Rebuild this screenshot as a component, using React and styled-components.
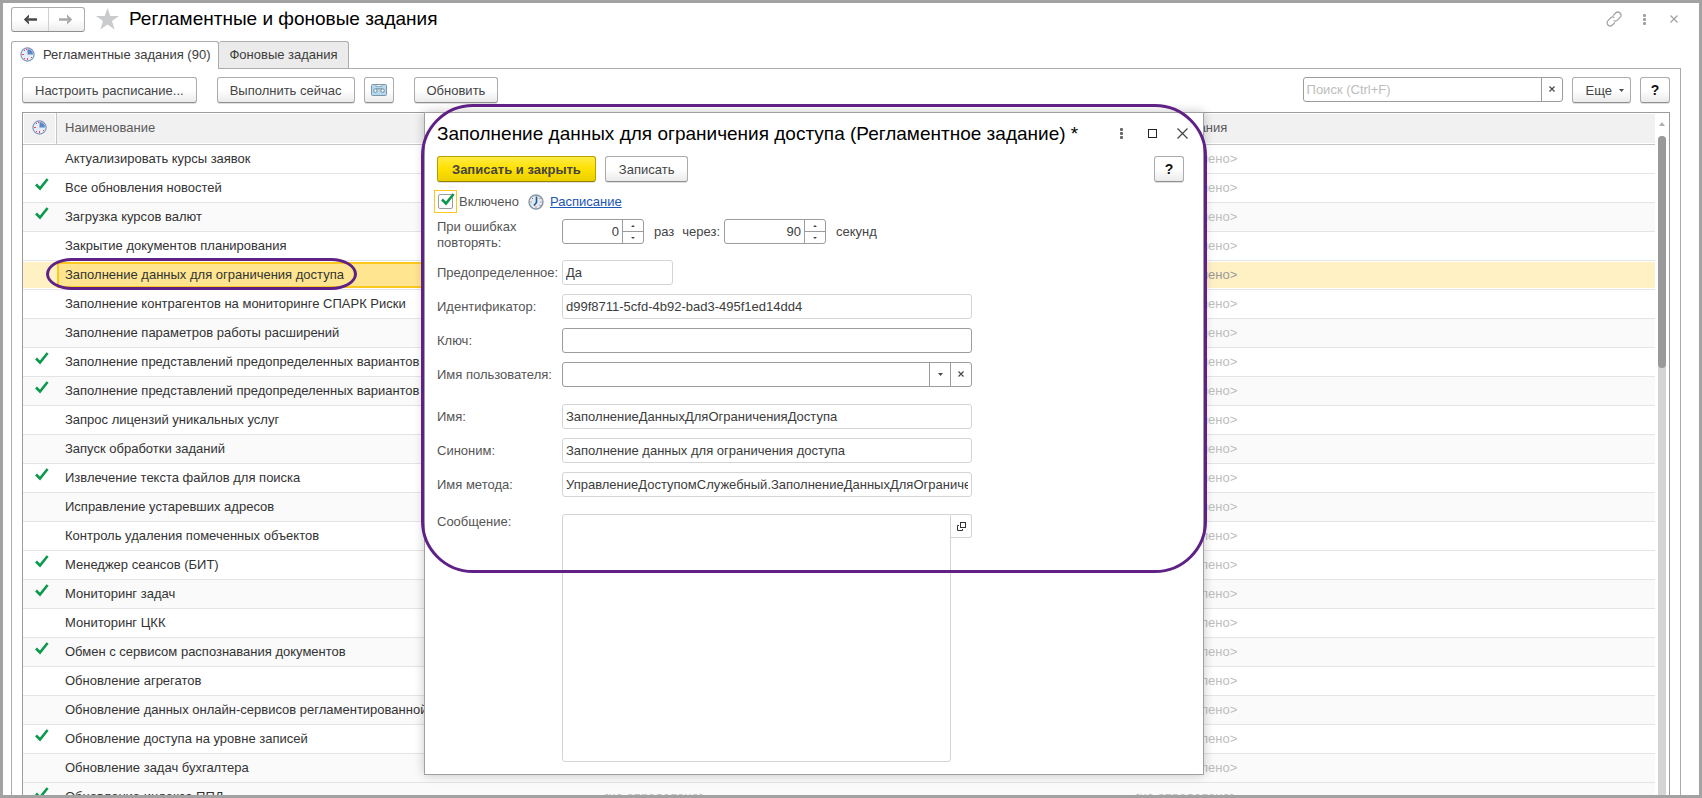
import React from "react";
import styled, { createGlobalStyle, css } from "styled-components";

const Global = createGlobalStyle`
  * { box-sizing: border-box; }
  html, body { margin: 0; height: 100%; }
  body, button, input, textarea {
    font-family: "Liberation Sans", Arial, sans-serif;
    font-size: 13px;
    color: #3c3c3c;
  }
  button, input, textarea { margin: 0; outline: none; }
`;

const Frame = styled.main`
  position: relative;
  display: flex;
  flex-direction: column;
  height: 100vh;
  border: 3px solid #a2a2a2;
  padding: 3px 18px 0 8px;
  overflow: hidden;
  background: #fff;
`;

const TopBar = styled.header`
  display: flex;
  align-items: center;
  height: 26px;
  flex: none;
  margin-right: -8px;
`;

const History = styled.div`
  display: flex;
  width: 74px;
  height: 25px;
  margin-right: 11px;
  border: 1px solid #acacac;
  border-bottom-color: #8f8f8f;
  border-radius: 3px;
  background: linear-gradient(#fff 50%, #ededed);
`;

const HistoryButton = styled.button`
  flex: 1;
  display: flex;
  align-items: center;
  justify-content: center;
  border: 0;
  padding: 0;
  background: none;
  color: ${(p) => (p.$dim ? "#a8a8a8" : "#4a4a4a")};
  & + & { border-left: 1px solid #d0d0d0; }
`;

const Heading = styled.h1`
  flex: 1;
  margin: 0;
  font-size: 19px;
  line-height: 24px;
  font-weight: 400;
  color: #000;
  white-space: nowrap;
`;

const PageTitle = styled(Heading)`
  margin-left: 10px;
`;

const IconButton = styled.button`
  display: flex;
  align-items: center;
  justify-content: center;
  width: ${(p) => p.$w || 30}px;
  height: 24px;
  padding: 0;
  border: 0;
  background: none;
  color: ${(p) => p.$color || "#a0a0a0"};
`;

const Tabs = styled.div`
  display: flex;
  flex: none;
  margin-top: 9px;
  height: 28px;
`;

const Tab = styled.button`
  display: flex;
  align-items: center;
  gap: 8px;
  height: ${(p) => (p.$active ? 28 : 27)}px;
  padding: ${(p) => (p.$active ? "0 8px 2px" : "0 10px 1px")};
  border: 1px solid #acacac;
  border-bottom: 0;
  border-left-width: ${(p) => (p.$active ? 1 : 0)}px;
  border-radius: 3px 3px 0 0;
  background: ${(p) => (p.$active ? "#fff" : "#ebebeb")};
  position: relative;
  z-index: 1;
  white-space: nowrap;
`;

const Panel = styled.section`
  flex: 1;
  min-height: 0;
  display: flex;
  flex-direction: column;
  margin-top: -1px;
  padding: 8px 10px 0;
  border: 1px solid #acacac;
  border-bottom: 0;
`;

const Toolbar = styled.div`
  display: flex;
  align-items: center;
  flex: none;
  height: 26px;
  gap: ${(p) => p.$gap || 9}px;
`;

const Group = styled.div`
  display: flex;
  gap: 9px;
`;

const Spacer = styled.div`
  flex: 1;
`;

const Button = styled.button`
  display: flex;
  align-items: center;
  justify-content: center;
  height: 26px;
  padding: 0 ${(p) => p.$pad || 12}px;
  border: 1px solid #acacac;
  border-bottom-color: #8f8f8f;
  border-radius: 3px;
  background: linear-gradient(#fff 50%, #ebebeb);
  box-shadow: 0 1px 0 #e0e0e0;
  color: #444;
  white-space: nowrap;
  ${(p) =>
    p.$primary &&
    css`
      font-weight: 700;
      border-color: #b79f00;
      border-bottom-color: #948100;
      background: linear-gradient(#ffec45, #ffe000 50%, #ecd000);
    `}
`;

const SquareButton = styled(Button)`
  width: 30px;
  padding: 0;
`;

const HelpButton = styled(SquareButton)`
  font-size: 14px;
  font-weight: 700;
  color: #111;
`;

const MoreButton = styled(Button)`
  gap: 7px;
  padding: 0 6px 0 13px;
`;

const Box = styled.div`
  display: flex;
  width: ${(p) => (p.$w ? `${p.$w}px` : "100%")};
  height: 25px;
  border: 1px solid ${(p) => (p.$readOnly ? "#d4d4d4" : "#9c9c9c")};
  border-radius: 3px;
  background: #fff;
  overflow: hidden;
`;

const Input = styled.input`
  flex: 1;
  min-width: 0;
  height: 100%;
  padding: 0 3px;
  border: 0;
  background: none;
  text-align: ${(p) => (p.$right ? "right" : "left")};
  font-size: 13px;
  &::placeholder { color: #bdbdbd; opacity: 1; }
`;

const BoxButton = styled.button`
  flex: none;
  display: flex;
  align-items: center;
  justify-content: center;
  width: ${(p) => p.$w || 21}px;
  padding: 0 0 1px;
  border: 0;
  border-left: 1px solid #9c9c9c;
  background: none;
  color: #4a4a4a;
`;

const Spin = styled.div`
  display: flex;
  flex-direction: column;
  width: 21px;
  border-left: 1px solid #9c9c9c;
`;

const SpinButton = styled.button`
  flex: 1;
  display: flex;
  align-items: center;
  justify-content: center;
  padding: 0;
  border: 0;
  background: none;
  & + & { border-top: 1px solid #9c9c9c; }
`;

const Grid = styled.div`
  flex: 1;
  min-height: 0;
  display: flex;
  margin-top: 9px;
  border: 1px solid #9c9c9c;
  border-bottom: 0;
  overflow: hidden;
`;

const TableArea = styled.div`
  flex: 1;
  overflow: hidden;
`;

const Table = styled.table`
  width: 100%;
  table-layout: fixed;
  border-collapse: separate;
  border-spacing: 0;
`;

const HeadCell = styled.th`
  height: 32px;
  padding: 0 8px 2px;
  border-bottom: 1px solid #c6c6c6;
  background: #f1f1f1;
  box-shadow: inset 0 1px 0 #fff, inset 0 -1px 0 #fff;
  text-align: left;
  font-weight: 400;
  color: #5a5a5a;
  ${(p) => p.$icon && css`
    padding: 1px 0 0 9px;
    border-right: 1px solid #c6c6c6;
    box-shadow: inset 1px 1px 0 #fff, inset -1px -1px 0 #fff;
  `}
`;

const Row = styled.tr`
  background: ${(p) => (p.$shade ? "#fafafa" : "#fff")};
`;

const Cell = styled.td`
  height: 29px;
  padding: 0 8px;
  border-bottom: 1px solid #e4e4e4;
  overflow: hidden;
  white-space: nowrap;
  line-height: 16px;
  color: ${(p) => (p.$muted ? (p.$selected ? "#999" : "#bebebe") : "#333")};
  ${(p) => p.$selected && css`
    background: #fff1c4;
    box-shadow: inset 0 1px 0 #fff, inset 0 -1px 0 #fff;
  `}
  ${(p) => p.$current && css`
    background: #ffe58f;
    box-shadow: inset 0 1px 0 #fff, inset 0 -1px 0 #fff, inset 2px 3px 0 #fcc81e, inset 0 -3px 0 #fcc81e;
  `}
`;

const MarkCell = styled(Cell)`
  padding: 4px 0 0 12px;
  vertical-align: top;
`;

const ScrollBar = styled.div`
  display: flex;
  flex-direction: column;
  align-items: center;
  width: 14px;
  padding: 9px 3px 0;
`;

const Track = styled.div`
  flex: 1;
  width: 8px;
  margin-top: 10px;
  border-radius: 4px 4px 0 0;
  background: #d4d4d4;
`;

const Thumb = styled.div`
  height: 232px;
  border-radius: 4px;
  background: #999;
`;

const Dialog = styled.section`
  position: absolute;
  left: 421px;
  top: 109px;
  width: 780px;
  padding: 8px 19px 12px 12px;
  border: 1px solid #a0a0a0;
  background: #fff;
  box-shadow: 0 0 10px rgba(0, 0, 0, 0.22);
`;

const DialogTop = styled.div`
  display: flex;
  align-items: center;
  height: 25px;
  margin-right: -14px;
`;

const DialogTools = styled(Toolbar)`
  margin: 10px 0 8px;
`;

const EnableRow = styled.div`
  display: flex;
  align-items: center;
  height: 23px;
  margin-left: -3px;
`;

const CheckLabel = styled.label`
  display: flex;
  align-items: center;
  gap: 2px;
  margin-right: 9px;
  color: #555;
`;

const CheckFocus = styled.span`
  position: relative;
  display: flex;
  padding: 3px;
  border: 1px solid #fcc81e;
  svg { position: absolute; left: 6px; top: 2px; }
`;

const CheckInput = styled.input`
  appearance: none;
  width: 15px;
  height: 15px;
  border: 1px solid #9c9c9c;
  border-radius: 2px;
  background: #fff;
`;

const Link = styled.a`
  margin-left: 6px;
  color: #1a56b4;
`;

const Form = styled.div`
  display: grid;
  grid-template-columns: 116px 410px;
  column-gap: 9px;
  row-gap: 9px;
  margin-top: ${(p) => (p.$first ? 6 : 17)}px;
`;

const Label = styled.label`
  padding-top: ${(p) => (p.$top ? 0 : 5)}px;
  line-height: 16px;
  color: #555;
  white-space: ${(p) => (p.$wrap ? "normal" : "nowrap")};
`;

const ErrorRow = styled.div`
  display: flex;
  align-items: center;
  height: 25px;
  color: #444;
  label { margin: 0 4px 0 8px; color: #444; }
`;

const Unit = styled.span`
  margin-left: 10px;
`;

const MessageBox = styled.div`
  display: flex;
  align-items: flex-start;
`;

const Message = styled.textarea`
  flex: 1;
  height: 248px;
  resize: none;
  border: 1px solid #d4d4d4;
  border-radius: 3px 0 3px 3px;
`;

const OpenButton = styled.button`
  display: flex;
  align-items: center;
  justify-content: center;
  width: 21px;
  height: 24px;
  padding: 0;
  border: 1px solid #d4d4d4;
  border-left: 0;
  border-radius: 0 3px 3px 0;
  background: #fff;
`;

const RowCallout = styled.div`
  position: absolute;
  left: 43px;
  top: 255px;
  width: 311px;
  height: 32px;
  border: 3px solid #5f2186;
  border-radius: 26px / 16px;
  pointer-events: none;
`;

const DialogCallout = styled.div`
  position: absolute;
  left: 418px;
  top: 101px;
  width: 786px;
  height: 469px;
  border: 3px solid #5f2186;
  border-radius: 52px;
  pointer-events: none;
`;

const Check = () => (
  <svg width="14" height="13" viewBox="0 0 14 13">
    <path d="M1 6.5 L5 10.5 L12.6 1" fill="none" stroke="#0b9a4c" strokeWidth="2.6" />
  </svg>
);

const Arrow = ({ flip }) => (
  <svg width="14" height="11" viewBox="0 0 14 11">
    <g transform={flip ? "translate(14 0) scale(-1 1)" : undefined}>
      <path d="M6 0.5 L0.8 5.5 L6 10.5 L6 7.5 L4.5 6.7 H14 V4.3 H4.5 L6 3.5 Z" fill="currentColor" />
    </g>
  </svg>
);

const Star = () => (
  <svg width="23" height="22" viewBox="0 0 23 22">
    <path d="M11.5 0 L14.3 8 H23 L16 13 L18.6 21.4 L11.5 16.4 L4.4 21.4 L7 13 L0 8 H8.7 Z" fill="#c9cbcd" />
  </svg>
);

const PieClock = () => (
  <svg width="15" height="15" viewBox="0 0 15 15">
    <circle cx="7.5" cy="7.5" r="6.6" fill="#e4eefb" stroke="#8195bd" strokeWidth="1.2" />
    <path d="M7.5 7.5 V2 A5.5 5.5 0 0 1 13 7.5 Z" fill="#5c86c6" />
    <path d="M2 7h2v1h-2z M7 11h1v2h-1z M4 3h1v1h-1z M4 11h1v1h-1z M11 10h1v1h-1z M6 2h1v1h-1z" fill="#f0453a" />
  </svg>
);

const Clock = () => (
  <svg width="16" height="16" viewBox="0 0 16 16">
    <circle cx="8" cy="8" r="7" fill="#dfe9f2" stroke="#8796a5" strokeWidth="1.4" />
    <path d="M8.5 2.5 V8.5 L6 11.5" fill="none" stroke="#1e5c94" strokeWidth="1.6" />
    <path d="M2.5 7.5h1v1h-1z M12.5 7.5h1v1h-1z M7.5 12.5h1v1h-1z M4 4h1v1h-1z M11.5 4h1v1h-1z M11.5 11h1v1h-1z" fill="#d8554c" />
  </svg>
);

const Cassette = () => (
  <svg width="16" height="12" viewBox="0 0 16 12">
    <rect x="0.5" y="0.5" width="15" height="11" rx="1" fill="#b4d8ee" stroke="#7d95a6" />
    <path d="M5 1 V2.5 H11 V1" fill="#e4f1f9" stroke="#8aa0b0" strokeWidth="0.8" />
    <path d="M5 4.8 H11" stroke="#7d95a6" />
    <circle cx="4.4" cy="6.6" r="1.7" fill="#f4fafd" stroke="#6d8799" />
    <circle cx="11.6" cy="6.6" r="1.7" fill="#f4fafd" stroke="#6d8799" />
  </svg>
);

const LinkIcon = () => (
  <svg width="16" height="16" viewBox="0 0 16 16" fill="none" stroke="currentColor" strokeWidth="1.2">
    <path d="M7 4.6 L9.6 2 A2.9 2.9 0 0 1 14 6.4 L11.3 9.1 A2.9 2.9 0 0 1 7.6 9.4" />
    <path d="M9 11.4 L6.4 14 A2.9 2.9 0 0 1 2 9.6 L4.7 6.9 A2.9 2.9 0 0 1 8.4 6.6" />
  </svg>
);

const Dots = () => (
  <svg width="3" height="11" viewBox="0 0 3 11" fill="currentColor">
    <rect y="0" width="3" height="3" rx="1" />
    <rect y="4" width="3" height="3" rx="1" />
    <rect y="8" width="3" height="3" rx="1" />
  </svg>
);

const Cross = ({ size = 6, weight = 1.2 }) => (
  <svg width={size} height={size} viewBox={`0 0 ${size} ${size}`}>
    <path d={`M0.5 0.5 L${size - 0.5} ${size - 0.5} M${size - 0.5} 0.5 L0.5 ${size - 0.5}`} stroke="currentColor" strokeWidth={weight} />
  </svg>
);

const Square = () => (
  <svg width="9" height="9" viewBox="0 0 9 9">
    <rect x="0.5" y="0.5" width="8" height="8" fill="none" stroke="#222" />
  </svg>
);

const Triangle = ({ up, w = 5, h = 3, color = "#4a4a4a" }) => (
  <svg width={w} height={h} viewBox="0 0 6 3" preserveAspectRatio="none">
    <path d={up ? "M0 3 L3 0 L6 3 Z" : "M0 0 L3 3 L6 0 Z"} fill={color} />
  </svg>
);

const Popout = () => (
  <svg width="9" height="9" viewBox="0 0 9 9" fill="none" stroke="#333">
    <rect x="3.5" y="0.5" width="5" height="5" />
    <path d="M2 3.5 H0.5 V8.5 H5.5 V7" />
  </svg>
);

const jobs = [
  { name: "Актуализировать курсы заявок" },
  { name: "Все обновления новостей", on: true },
  { name: "Загрузка курсов валют", on: true, shade: true },
  { name: "Закрытие документов планирования" },
  { name: "Заполнение данных для ограничения доступа", selected: true },
  { name: "Заполнение контрагентов на мониторинге СПАРК Риски" },
  { name: "Заполнение параметров работы расширений", shade: true },
  { name: "Заполнение представлений предопределенных вариантов отчетов", on: true },
  { name: "Заполнение представлений предопределенных вариантов отчетов", on: true, shade: true },
  { name: "Запрос лицензий уникальных услуг" },
  { name: "Запуск обработки заданий", shade: true },
  { name: "Извлечение текста файлов для поиска", on: true },
  { name: "Исправление устаревших адресов", shade: true },
  { name: "Контроль удаления помеченных объектов" },
  { name: "Менеджер сеансов (БИТ)", on: true },
  { name: "Мониторинг задач", on: true, shade: true },
  { name: "Мониторинг ЦКК" },
  { name: "Обмен с сервисом распознавания документов", on: true, shade: true },
  { name: "Обновление агрегатов" },
  { name: "Обновление данных онлайн-сервисов регламентированной отчетности", shade: true },
  { name: "Обновление доступа на уровне записей", on: true },
  { name: "Обновление задач бухгалтера", shade: true },
  { name: "Обновление индекса ППД", on: true, shade: true },
];

function Field({ id, label, value, w, readOnly, children }) {
  return (
    <>
      <Label htmlFor={id}>{label}</Label>
      <Box $w={w} $readOnly={readOnly}>
        <Input id={id} defaultValue={value} readOnly={readOnly} />
        {children}
      </Box>
    </>
  );
}

function NumberBox({ id, w, value }) {
  return (
    <Box $w={w}>
      <Input id={id} $right defaultValue={value} inputMode="numeric" />
      <Spin>
        <SpinButton type="button" aria-label="Увеличить"><Triangle up w={4} h={2} /></SpinButton>
        <SpinButton type="button" aria-label="Уменьшить"><Triangle w={4} h={2} /></SpinButton>
      </Spin>
    </Box>
  );
}

function JobRow({ job }) {
  const sel = job.selected;
  return (
    <Row $shade={job.shade}>
      <MarkCell $selected={sel}>{job.on && <Check />}</MarkCell>
      <Cell $current={sel}>{job.name}</Cell>
      <Cell $muted $selected={sel}>&lt;не определено&gt;</Cell>
      <Cell $muted $selected={sel}>&lt;не определено&gt;</Cell>
    </Row>
  );
}

function JobDialog() {
  return (
    <Dialog role="dialog" aria-labelledby="dialog-title">
      <DialogTop>
        <Heading id="dialog-title" as="h2">
          Заполнение данных для ограничения доступа (Регламентное задание) *
        </Heading>
        <IconButton aria-label="Действия" $w={32} $color="#666"><Dots /></IconButton>
        <IconButton aria-label="Развернуть"><Square /></IconButton>
        <IconButton aria-label="Закрыть" $w={31} $color="#444"><Cross size={11} /></IconButton>
      </DialogTop>
      <DialogTools>
        <Button $primary $pad={14}>Записать и закрыть</Button>
        <Button $pad={13}>Записать</Button>
        <Spacer />
        <HelpButton>?</HelpButton>
      </DialogTools>
      <EnableRow>
        <CheckLabel>
          <CheckFocus>
            <CheckInput type="checkbox" defaultChecked />
            <Check />
          </CheckFocus>
          Включено
        </CheckLabel>
        <Clock />
        <Link href="#schedule">Расписание</Link>
      </EnableRow>
      <Form $first>
        <Label $top $wrap htmlFor="retries">При ошибках повторять:</Label>
        <ErrorRow>
          <NumberBox id="retries" w={82} value="0" />
          <Unit>раз</Unit>
          <label htmlFor="delay">через:</label>
          <NumberBox id="delay" w={102} value="90" />
          <Unit>секунд</Unit>
        </ErrorRow>
        <Field id="predefined" label="Предопределенное:" value="Да" w={111} readOnly />
        <Field id="ident" label="Идентификатор:" value="d99f8711-5cfd-4b92-bad3-495f1ed14dd4" readOnly />
        <Field id="key" label="Ключ:" />
        <Field id="user" label="Имя пользователя:">
          <BoxButton aria-label="Выбрать"><Triangle /></BoxButton>
          <BoxButton aria-label="Очистить"><Cross /></BoxButton>
        </Field>
      </Form>
      <Form>
        <Field id="name" label="Имя:" value="ЗаполнениеДанныхДляОграниченияДоступа" readOnly />
        <Field id="synonym" label="Синоним:" value="Заполнение данных для ограничения доступа" readOnly />
        <Field id="method" label="Имя метода:" value="УправлениеДоступомСлужебный.ЗаполнениеДанныхДляОграниченияДоступа" readOnly />
      </Form>
      <Form>
        <Label $top htmlFor="message">Сообщение:</Label>
        <MessageBox>
          <Message id="message" readOnly />
          <OpenButton aria-label="Открыть"><Popout /></OpenButton>
        </MessageBox>
      </Form>
    </Dialog>
  );
}

export default function App() {
  return (
    <>
      <Global />
      <Frame>
        <TopBar>
          <History>
            <HistoryButton aria-label="Назад"><Arrow /></HistoryButton>
            <HistoryButton aria-label="Вперед" $dim><Arrow flip /></HistoryButton>
          </History>
          <Star />
          <PageTitle>Регламентные и фоновые задания</PageTitle>
          <IconButton aria-label="Ссылка"><LinkIcon /></IconButton>
          <IconButton aria-label="Действия"><Dots /></IconButton>
          <IconButton aria-label="Закрыть"><Cross size={8} /></IconButton>
        </TopBar>
        <Tabs>
          <Tab $active><PieClock />Регламентные задания (90)</Tab>
          <Tab>Фоновые задания</Tab>
        </Tabs>
        <Panel>
          <Toolbar $gap={20}>
            <Button>Настроить расписание...</Button>
            <Group>
              <Button>Выполнить сейчас</Button>
              <SquareButton aria-label="Журнал"><Cassette /></SquareButton>
            </Group>
            <Button>Обновить</Button>
            <Spacer />
            <Group>
              <Box $w={260}>
                <Input placeholder="Поиск (Ctrl+F)" aria-label="Поиск" />
                <BoxButton aria-label="Очистить"><Cross /></BoxButton>
              </Box>
              <MoreButton>Еще<Triangle /></MoreButton>
              <HelpButton>?</HelpButton>
            </Group>
          </Toolbar>
          <Grid>
            <TableArea>
              <Table>
                <colgroup>
                  <col width="34" />
                  <col width="536" />
                  <col />
                  <col />
                </colgroup>
                <thead>
                  <tr>
                    <HeadCell $icon><PieClock /></HeadCell>
                    <HeadCell>Наименование</HeadCell>
                    <HeadCell>Дата начала</HeadCell>
                    <HeadCell>Дата окончания</HeadCell>
                  </tr>
                </thead>
                <tbody>
                  {jobs.map((job, i) => <JobRow key={i} job={job} />)}
                </tbody>
              </Table>
            </TableArea>
            <ScrollBar>
              <Triangle up w={6} h={4} color="#b0b0b0" />
              <Track><Thumb /></Track>
            </ScrollBar>
          </Grid>
        </Panel>
        <RowCallout />
        <JobDialog />
        <DialogCallout />
      </Frame>
    </>
  );
}
